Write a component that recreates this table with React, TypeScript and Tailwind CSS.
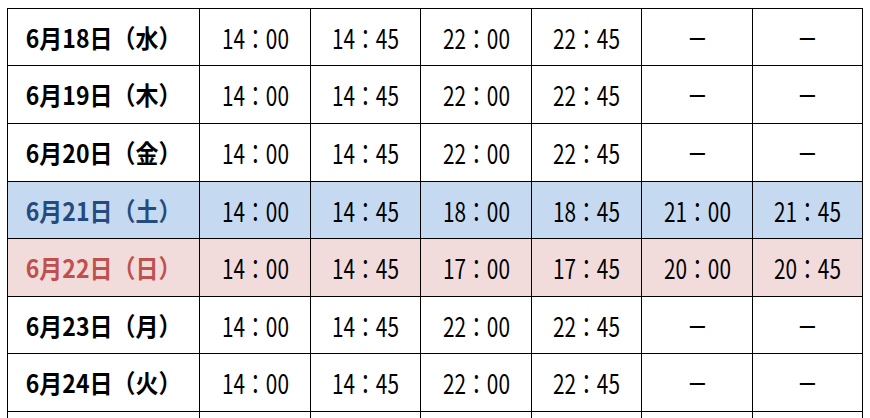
import React from "react";

type Row = {
  date: string;
  times: string[];
  bg: string;
  dateColor: string;
  h: string;
};

const D = "－";

const rows: Row[] = [
  { date: "6月18日（水）", times: ["14：00", "14：45", "22：00", "22：45", D, D], bg: "bg-white", dateColor: "text-black", h: "h-[56px]" },
  { date: "6月19日（木）", times: ["14：00", "14：45", "22：00", "22：45", D, D], bg: "bg-white", dateColor: "text-black", h: "h-[57px]" },
  { date: "6月20日（金）", times: ["14：00", "14：45", "22：00", "22：45", D, D], bg: "bg-white", dateColor: "text-black", h: "h-[57px]" },
  { date: "6月21日（土）", times: ["14：00", "14：45", "18：00", "18：45", "21：00", "21：45"], bg: "bg-[#c5d9f1]", dateColor: "text-[#244a7e]", h: "h-[56px]" },
  { date: "6月22日（日）", times: ["14：00", "14：45", "17：00", "17：45", "20：00", "20：45"], bg: "bg-[#f2dcdb]", dateColor: "text-[#c0504d]", h: "h-[57px]" },
  { date: "6月23日（月）", times: ["14：00", "14：45", "22：00", "22：45", D, D], bg: "bg-white", dateColor: "text-black", h: "h-[56px]" },
  { date: "6月24日（火）", times: ["14：00", "14：45", "22：00", "22：45", D, D], bg: "bg-white", dateColor: "text-black", h: "h-[57px]" },
];

const font = { fontFamily: '"Noto Sans CJK JP", "Noto Sans", sans-serif' };

export default function App() {
  return (
    <div className="w-[870px] h-[418px] overflow-hidden bg-white" style={font}>
      <div className="pt-[8px] pl-[7px]">
        <div className="inline-grid grid-cols-[191px_110px_109px_110px_109px_110px_109px] gap-px bg-black p-px">
          {rows.map((r, i) => (
            <React.Fragment key={i}>
              <div className={`${r.bg} ${r.h} flex items-center justify-center`}>
                <span className={`${r.dateColor} inline-block scale-x-[0.92] font-bold text-[25px] leading-none whitespace-nowrap`}>{r.date}</span>
              </div>
              {r.times.map((t, j) => (
                <div key={j} className={`${r.bg} ${r.h} flex items-center justify-center`}>
                  <span className="inline-block scale-x-[0.77] text-black text-[27px] leading-none whitespace-nowrap">{t}</span>
                </div>
              ))}
            </React.Fragment>
          ))}
          {Array.from({ length: 7 }).map((_, j) => (
            <div key={`e${j}`} className="bg-white h-[57px]" />
          ))}
        </div>
      </div>
    </div>
  );
}
